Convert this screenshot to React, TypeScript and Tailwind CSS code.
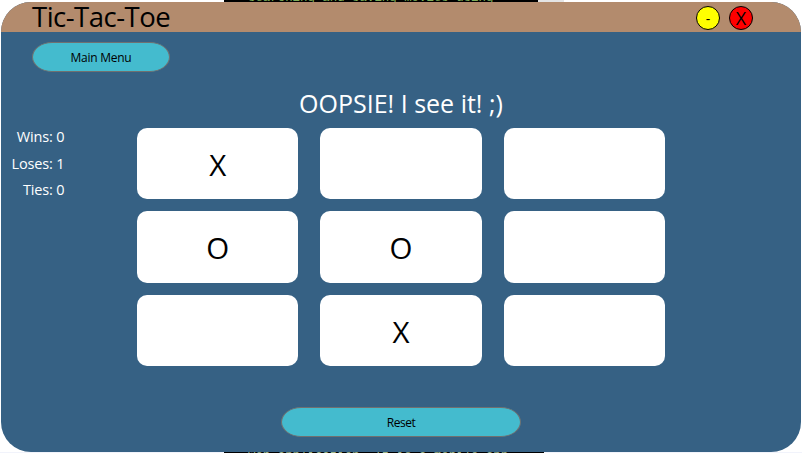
import React from "react";

const cells = ["X", "", "", "O", "O", "", "", "X", ""];

const scores = [
  { label: "Wins", value: 0 },
  { label: "Loses", value: 1 },
  { label: "Ties", value: 0 },
];

function TitleBar() {
  return (
    <header className="flex h-[30px] shrink-0 items-center justify-between bg-[#b38b6d] pl-[31px] pr-[48px] text-black">
      <h1 className="h-[30px] text-[27.5px] leading-[30px] tracking-[-0.5px] whitespace-nowrap">Tic-Tac-Toe</h1>
      <div className="flex gap-[9px] pt-[2px]">
        <button className="flex size-6 items-center justify-center rounded-full border-[1.5px] border-black bg-[#ffff00] pt-[2px] text-[14px] leading-none">
          -
        </button>
        <button className="flex size-6 items-center justify-center rounded-full border-[1.5px] border-black bg-[#ff0000] text-[18px] leading-none">
          X
        </button>
      </div>
    </header>
  );
}

function PillButton({ className, children }: { className: string; children: React.ReactNode }) {
  return (
    <button
      className={`flex h-[30px] items-center justify-center rounded-[20px/15px] border border-[#707070] bg-[#44bbce] pt-[2px] text-[12px] leading-none text-black ${className}`}
    >
      {children}
    </button>
  );
}

export default function App() {
  return (
    <div className="flex h-[453px] w-[802px] flex-col overflow-hidden bg-white font-['Open_Sans','Noto_Sans',sans-serif]">
      <div className="flex h-[2px] shrink-0 overflow-hidden pl-[224px]">
        <div className="h-[2px] w-[314px] overflow-hidden bg-black pl-[24px]">
          <p className="-mt-[10px] font-['Liberation_Mono',monospace] text-[12.4px] leading-[16px] whitespace-nowrap text-[#7fae5a]">
            searching and saving movies using
          </p>
        </div>
        <div className="w-[26px] bg-[#e4e4e4]" />
      </div>

      <main className="mx-px flex h-[450px] shrink-0 flex-col overflow-hidden rounded-[30px] bg-[#366184]">
        <TitleBar />
        <div className="pt-[10px] pl-[31px]">
          <PillButton className="w-[138px] tracking-[-0.25px]">Main Menu</PillButton>
        </div>
        <h2 className="mt-[13px] h-[36px] text-center text-[25px] leading-[36px] text-white">
          OOPSIE! I see it! ;)
        </h2>
        <div className="mt-[7px] flex">
          <div className="flex w-[136px] flex-col pr-[72.5px] text-right text-[14.5px] leading-[26.5px] tracking-[-0.15px] text-white">
            {scores.map((s) => (
              <span key={s.label} className="-mt-[4px] mb-[4px] whitespace-nowrap">
                {s.label}: {s.value}
              </span>
            ))}
          </div>
          <div className="grid h-[238px] w-[528px] grid-cols-3 grid-rows-3 gap-x-[22px] gap-y-[12px]">
            {cells.map((c, i) => (
              <button
                key={i}
                className="flex items-center justify-center rounded-[10px] bg-white pt-[2.5px] text-[29.5px] leading-none text-black"
              >
                {c}
              </button>
            ))}
          </div>
        </div>
        <div className="mt-[41px] flex justify-center">
          <PillButton className="w-[240px] tracking-[-0.45px]">Reset</PillButton>
        </div>
      </main>

      <div className="flex h-px shrink-0 overflow-hidden bg-[#f1f3fb] pl-[224px]">
        <div className="h-px w-[320px] overflow-hidden bg-black pl-[24px]">
          <p className="-mt-[4px] font-['Liberation_Mono',monospace] text-[12.4px] leading-[16px] whitespace-nowrap text-[#9fb589]">
            Web application. It is a mobile app
          </p>
        </div>
      </div>
    </div>
  );
}
